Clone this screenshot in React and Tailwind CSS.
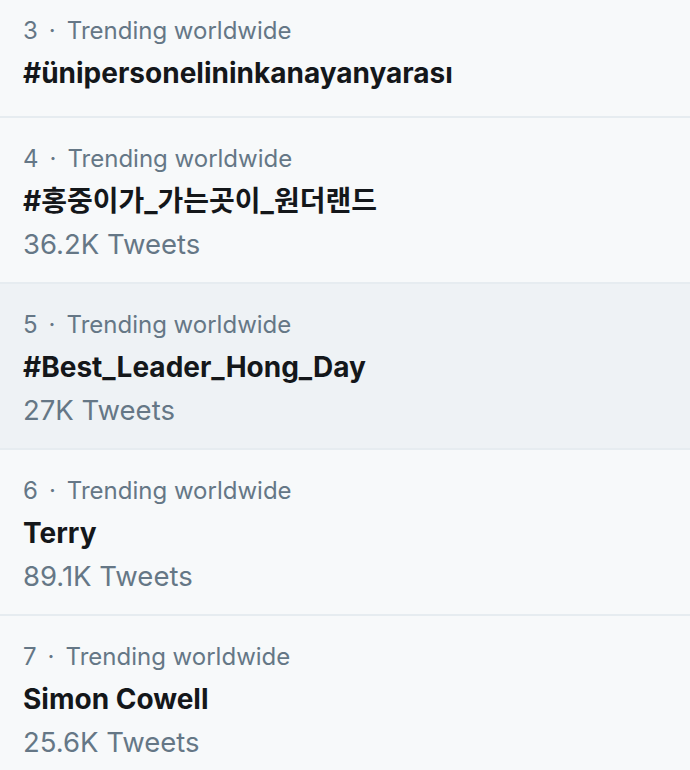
import React from "react";

const trends = [
  { n: 3, title: "#ünipersonelininkanayanyarası", count: null, first: true },
  { n: 4, title: "#홍중이가_가는곳이_원더랜드", count: "36.2K Tweets" },
  { n: 5, title: "#Best_Leader_Hong_Day", count: "27K Tweets", hover: true },
  { n: 6, title: "Terry", count: "89.1K Tweets" },
  { n: 7, title: "Simon Cowell", count: "25.6K Tweets" },
];

function Trend({ t }) {
  return (
    <div
      className={
        "flex flex-col border-b-2 border-[#e6ecf0] pl-[23px] pr-[24px] " +
        (t.hover ? "bg-[#eef2f5] " : "bg-[#f7f9fa] ") +
        (t.first ? "pt-[11px] pb-[21px]" : "pt-[21px] pb-[17px]")
      }
    >
      <div className="text-[24px] leading-[40px] text-[#657786]">
        {t.n}
        <span className="px-[11px]">·</span>
        Trending worldwide
      </div>
      <div className="text-[28px] leading-[44px] font-bold text-[#14171a]">
        {t.title}
      </div>
      {t.count && (
        <div className="text-[27.5px] leading-[42px] text-[#657786]">{t.count}</div>
      )}
    </div>
  );
}

export default function App() {
  return (
    <div
      className="w-[690px] h-[770px] overflow-hidden bg-[#f7f9fa]"
      style={{ fontFamily: 'Inter, "Noto Sans CJK KR", sans-serif' }}
    >
      {trends.map((t) => (
        <Trend key={t.n} t={t} />
      ))}
    </div>
  );
}
